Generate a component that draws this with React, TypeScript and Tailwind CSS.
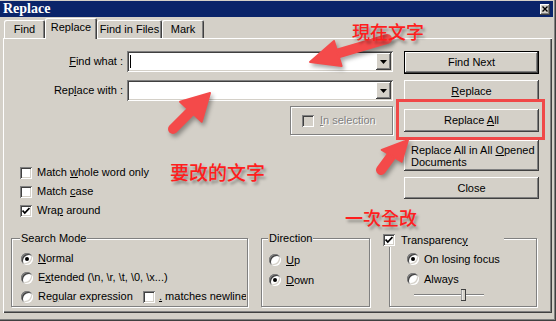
import React from 'react'

const raised = '[box-shadow:inset_-1px_-1px_#404040,inset_1px_1px_#fff,inset_-2px_-2px_#808080]'
const sunken = '[box-shadow:inset_1px_1px_#808080,inset_-1px_-1px_#fff,inset_2px_2px_#404040,inset_-2px_-2px_#d4d0c8]'
const etched = 'border border-[#808080] [box-shadow:1px_1px_0_#fff,inset_1px_1px_0_#fff]'

function Check({ on = false, disabled = false }: { on?: boolean; disabled?: boolean }) {
    return (
        <div className={`w-[12px] h-[12px] shrink-0 flex items-center justify-center ${disabled ? 'bg-[#d4d0c8]' : 'bg-white'} ${sunken}`}>
            {on && (
                <svg width="8" height="8" viewBox="0 0 8 8">
                    <path d="M0.5 3.5 L2.8 6 L7.5 1" stroke="#000" strokeWidth="1.8" fill="none" />
                </svg>
            )}
        </div>
    )
}

function Radio({ on = false }: { on?: boolean }) {
    return (
        <div className="w-[12px] h-[12px] shrink-0 rounded-full bg-white flex items-center justify-center [box-shadow:inset_1px_1px_#808080,inset_-1px_-1px_#fff,inset_2px_2px_#404040,inset_-2px_-2px_#d4d0c8]">
            {on && <div className="w-[4px] h-[4px] rounded-full bg-black" />}
        </div>
    )
}

function Combo({ caret = false }: { caret?: boolean }) {
    return (
        <div className={`ml-[4px] w-[266px] h-[21px] bg-white flex items-center pr-[2px] ${sunken}`}>
            {caret && <div className="ml-[3px] w-px h-[13px] bg-black" />}
            <div className="flex-1" />
            <div className={`w-[15px] h-[17px] bg-[#d4d0c8] flex items-center justify-center ${raised}`}>
                <svg width="7" height="4" viewBox="0 0 7 4">
                    <path d="M0 0 H7 L3.5 4 Z" fill="#000" />
                </svg>
            </div>
        </div>
    )
}

function Btn({ children, h, mt, def = false, left = false }: { children: React.ReactNode; h: string; mt: string; def?: boolean; left?: boolean }) {
    return (
        <div className={`${h} ${mt} w-[135px] ${def ? 'border border-black' : ''}`}>
            <div className={`w-full h-full bg-[#d4d0c8] flex items-center ${left ? 'justify-start pl-[7px] text-left leading-[12px] whitespace-nowrap' : 'justify-center'} ${raised}`}>
                <span>{children}</span>
            </div>
        </div>
    )
}

function Tab({ label, w, sel = false }: { label: string; w: string; sel?: boolean }) {
    return (
        <div
            className={`${w} ${sel ? 'h-[21px] -mb-px relative z-10 pb-[3px]' : 'h-[18px]'} bg-[#d4d0c8] rounded-t-[2px] flex items-center justify-center [box-shadow:inset_1px_1px_#fff,inset_-1px_0_#404040,inset_-2px_0_#808080]`}
        >
            {label}
        </div>
    )
}

export default function App() {
    return (
        <div className="w-[556px] h-[321px] bg-[#d4d0c8] relative overflow-hidden pt-px font-['Liberation_Sans',Arial,sans-serif] text-[11px] text-black [box-shadow:inset_-1px_-1px_#404040,inset_-2px_-2px_#808080]">
            {/* Title bar */}
            <div className="w-[553px] h-[16px] bg-[#0a246a] flex items-center justify-between">
                <span className="pl-[3px] text-white font-bold text-[14px] leading-none font-['Liberation_Serif',serif]">Replace</span>
                <div className={`mr-[3px] w-[10px] h-[11px] bg-[#d4d0c8] flex items-center justify-center ${raised}`}>
                    <svg width="6" height="6" viewBox="0 0 6 6">
                        <path d="M0.5 0.5 L5.5 5.5 M5.5 0.5 L0.5 5.5" stroke="#000" strokeWidth="1.4" />
                    </svg>
                </div>
            </div>

            {/* Tabs */}
            <div className="h-[21px] pl-[4px] flex items-end">
                <Tab label="Find" w="w-[41px]" />
                <Tab label="Replace" w="w-[52px]" sel />
                <Tab label="Find in Files" w="w-[65px]" />
                <Tab label="Mark" w="w-[42px]" />
            </div>

            {/* Panel */}
            <div className="ml-[3px] w-[549px] h-[275px] flex flex-col pt-[13px] [box-shadow:inset_1px_1px_#fff,inset_-1px_-1px_#404040,inset_-2px_-2px_#808080]">
                <div className="flex items-start">
                    <div className="w-[390px] flex flex-col">
                        <div className="h-[21px] flex items-center">
                            <span className="w-[120px] text-right"><u>F</u>ind what :</span>
                            <Combo caret />
                        </div>
                        <div className="h-[21px] mt-[8px] flex items-center">
                            <span className="w-[120px] text-right">Rep<u>l</u>ace with :</span>
                            <Combo />
                        </div>
                        <div className={`mt-[5px] self-end w-[103px] h-[29px] flex items-center pl-[11px] gap-[6px] ${etched}`}>
                            <Check disabled />
                            <span className="text-[#808080] [text-shadow:1px_1px_0_#fff]"><u>I</u>n selection</span>
                        </div>
                        <div className="mt-[28px] pl-[17px] flex flex-col">
                            <div className="h-[19px] flex items-center gap-[5px]"><Check /><span>Match <u>w</u>hole word only</span></div>
                            <div className="h-[19px] flex items-center gap-[5px]"><Check /><span>Match <u>c</u>ase</span></div>
                            <div className="h-[19px] flex items-center gap-[5px]"><Check on /><span>Wra<u>p</u> around</span></div>
                        </div>
                    </div>
                    <div className="ml-[11px] flex flex-col">
                        <Btn h="h-[23px]" mt="mt-0" def>Find Next</Btn>
                        <Btn h="h-[22px]" mt="mt-[6px]"><u>R</u>eplace</Btn>
                        <Btn h="h-[23px]" mt="mt-[7px]">Replace <u>A</u>ll</Btn>
                        <Btn h="h-[31px]" mt="mt-[8px]" left>Replace All in All <u>O</u>pened<br />Documents</Btn>
                        <Btn h="h-[22px]" mt="mt-[6px]">Close</Btn>
                    </div>
                </div>

                {/* Bottom groups */}
                <div className="mt-[18px] pl-[8px] flex items-start">
                    <div className={`relative w-[237px] h-[69px] ${etched}`}>
                        <span className="absolute left-[8px] -top-[7px] px-px bg-[#d4d0c8] leading-[13px]">Search Mode</span>
                        <div className="pt-[10px] pl-[9px] w-[234px] overflow-hidden flex flex-col whitespace-nowrap">
                            <div className="h-[19px] flex items-center gap-[5px]"><Radio on /><span><u>N</u>ormal</span></div>
                            <div className="h-[19px] flex items-center gap-[5px]"><Radio /><span>E<u>x</u>tended (\n, \r, \t, \0, \x...)</span></div>
                            <div className="h-[19px] flex items-center gap-[5px]">
                                <Radio />
                                <span className="w-[100px] shrink-0">Re<u>g</u>ular expression</span>
                                <Check />
                                <span className="ml-[-1px]"><u>.</u> matches newline</span>
                            </div>
                        </div>
                    </div>
                    <div className={`relative ml-[13px] w-[109px] h-[69px] ${etched}`}>
                        <span className="absolute left-[6px] -top-[7px] px-px bg-[#d4d0c8] leading-[13px]">Direction</span>
                        <div className="pt-[11px] pl-[7px] flex flex-col">
                            <div className="h-[20px] flex items-center gap-[5px]"><Radio /><span><u>U</u>p</span></div>
                            <div className="h-[20px] flex items-center gap-[5px]"><Radio on /><span><u>D</u>own</span></div>
                        </div>
                    </div>
                    <div className={`relative ml-[19px] w-[148px] h-[69px] ${etched}`}>
                        <div className="absolute -left-[7px] -top-[6px] w-[121px] h-[14px] bg-[#d4d0c8] flex items-center gap-[6px]">
                            <Check on />
                            <span>Transparenc<u>y</u></span>
                        </div>
                        <div className="pt-[10px] pl-[17px] flex flex-col">
                            <div className="h-[20px] flex items-center gap-[5px]"><Radio on /><span>On losing focus</span></div>
                            <div className="h-[20px] flex items-center gap-[5px]"><Radio /><span>Always</span></div>
                            <svg className="ml-[7px]" width="71" height="12" viewBox="0 0 71 12">
                                <line x1="0" y1="5.5" x2="70" y2="5.5" stroke="#808080" />
                                <line x1="0" y1="6.5" x2="70" y2="6.5" stroke="#fff" />
                                <rect x="47.5" y="0.5" width="4" height="11" fill="#d4d0c8" stroke="#404040" />
                                <line x1="48" y1="1" x2="48" y2="11" stroke="#fff" />
                            </svg>
                        </div>
                    </div>
                </div>
            </div>

            {/* Annotations */}
            <div className="absolute inset-0 pointer-events-none">
                <div className="absolute left-[396px] top-[99px] w-[149px] h-[41px] border-[3px] border-[#f04848]" />
                <svg className="absolute left-0 top-0 [filter:drop-shadow(2px_3px_2px_rgba(0,0,0,0.35))]" width="556" height="321" viewBox="0 0 556 321">
                    <g fill="#f44a4a" stroke="#f44a4a" strokeLinecap="round" strokeLinejoin="round">
                        <line x1="336" y1="54" x2="387" y2="39" strokeWidth="10" />
                        <polygon points="310,62 334,41 341.6,66" strokeWidth="2" />
                        <line x1="191" y1="111" x2="173" y2="129" strokeWidth="10" />
                        <polygon points="210,93 180,101.7 201.7,121.7" strokeWidth="2" />
                        <line x1="392" y1="155" x2="381" y2="170" strokeWidth="10" />
                        <polygon points="408,140 381.7,150 401.7,161.7" strokeWidth="2" />
                    </g>
                </svg>
                <span className="absolute left-[352px] top-[21px] text-[18px] leading-[20px] text-[#ff1e1e] font-medium font-['Noto_Sans_CJK_TC','Noto_Sans_CJK_SC',sans-serif] [text-shadow:2px_3px_3px_rgba(0,0,0,0.35)]">現在文字</span>
                <span className="absolute left-[170px] top-[162px] text-[19px] leading-[20px] text-[#ff1e1e] font-medium font-['Noto_Sans_CJK_TC','Noto_Sans_CJK_SC',sans-serif] [text-shadow:2px_3px_3px_rgba(0,0,0,0.35)]">要改的文字</span>
                <span className="absolute left-[345px] top-[207px] text-[18px] leading-[20px] text-[#ff1e1e] font-medium font-['Noto_Sans_CJK_TC','Noto_Sans_CJK_SC',sans-serif] [text-shadow:2px_3px_3px_rgba(0,0,0,0.35)]">一次全改</span>
            </div>
        </div>
    )
}
